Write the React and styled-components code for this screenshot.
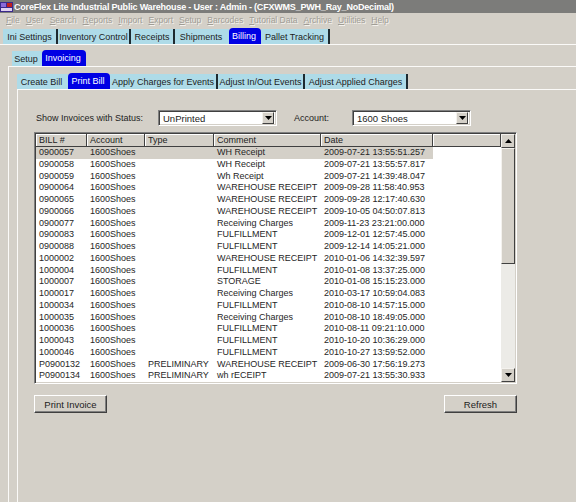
import React from 'react';
import styled, { createGlobalStyle } from 'styled-components';

const GlobalStyle = createGlobalStyle`
  html, body {
    margin: 0;
    padding: 0;
    background: #d4d0c8;
  }
  #root {
    width: 576px;
    height: 502px;
    overflow: hidden;
  }
`;

const Window = styled.div`
  width: 576px;
  height: 502px;
  background: #d4d0c8;
  font-family: 'Liberation Sans', Arial, sans-serif;
  font-size: 9px;
  color: #1c1c1c;
  display: flex;
  flex-direction: column;
`;

const TitleBar = styled.div`
  height: 13px;
  background: #7c7c7a;
  display: flex;
  align-items: center;
  gap: 1px;
  color: #fff;
  font-weight: bold;
  font-size: 9px;
  letter-spacing: -0.2px;
  white-space: nowrap;
  overflow: hidden;
`;

const MenuBar = styled.div`
  height: 14px;
  display: flex;
  align-items: center;
  gap: 6px;
  padding-left: 6px;
  font-size: 8.5px;
  color: #a09d96;
  text-shadow: 1px 1px 0 #f4f2ee;
`;

const MenuItem = styled.span`
  u { text-decoration: underline; }
`;

const TabStrip = styled.div`
  display: flex;
  align-items: flex-end;
  height: 16px;
  margin-left: ${(p) => p.$indent || 0}px;
  margin-top: ${(p) => p.$top || 0}px;
`;

const Tab = styled.div`
  width: ${(p) => p.$w}px;
  height: ${(p) => (p.$active ? 16 : 15)}px;
  display: flex;
  align-items: center;
  justify-content: center;
  background: ${(p) => (p.$active ? '#0000e4' : '#aedbe8')};
  color: ${(p) => (p.$active ? '#ffffff' : '#1c1c1c')};
  border-radius: ${(p) => (p.$active ? '4px 4px 0 0' : '0')};
  border-right: 2px solid ${(p) => (p.$sep ? '#1e2a30' : 'transparent')};
  box-sizing: border-box;
  white-space: nowrap;
`;

const Panel = styled.div`
  border-top: 1px solid #fbfaf8;
  border-left: ${(p) => (p.$left ? '1px solid #fbfaf8' : 'none')};
  padding: ${(p) => p.$pad};
  flex: 1;
  display: flex;
  flex-direction: column;
`;

const FilterRow = styled.div`
  display: flex;
  align-items: center;
  height: 16px;
`;

const Label = styled.div`
  width: ${(p) => p.$w}px;
  padding-left: ${(p) => p.$pl || 0}px;
  white-space: nowrap;
`;

const Select = styled.div`
  width: 119px;
  height: 16px;
  box-sizing: border-box;
  background: #fff;
  border-top: 1px solid #808080;
  border-left: 1px solid #808080;
  border-right: 1px solid #fff;
  border-bottom: 1px solid #fff;
  box-shadow: inset 1px 1px 0 #404040, inset -1px -1px 0 #d4d0c8;
  display: flex;
  align-items: center;
  padding-left: 4px;
  padding-right: 2px;
  font-size: 9.5px;
  margin-right: ${(p) => p.$mr || 0}px;
`;

const SelectText = styled.span`
  flex: 1;
`;

const ArrowButton = styled.div`
  width: ${(p) => p.$w || 12}px;
  height: ${(p) => p.$h || 12}px;
  box-sizing: border-box;
  background: #d4d0c8;
  border-top: 1px solid #f4f2ee;
  border-left: 1px solid #f4f2ee;
  border-right: 1px solid #404040;
  border-bottom: 1px solid #404040;
  display: flex;
  align-items: center;
  justify-content: center;
  flex-shrink: 0;
`;

const Table = styled.div`
  margin-top: 6px;
  width: 483px;
  height: 252px;
  box-sizing: border-box;
  border-top: 1px solid #808080;
  border-left: 1px solid #808080;
  border-right: 1px solid #fff;
  border-bottom: 1px solid #fff;
  box-shadow: inset 1px 1px 0 #404040, inset -1px -1px 0 #d4d0c8;
  padding: 1px;
  display: flex;
  background: #fff;
`;

const Grid = styled.div`
  flex: 1;
  display: flex;
  flex-direction: column;
  overflow: hidden;
`;

const Header = styled.div`
  display: grid;
  grid-template-columns: 51px 58px 69px 107px 112px 1fr;
  height: 14px;
  background: #d4d0c8;
  border-bottom: 1px solid #404040;
  box-sizing: border-box;
`;

const HeadCell = styled.div`
  padding-left: 3px;
  display: flex;
  align-items: center;
  border-right: 1px solid #404040;
  box-shadow: inset 1px 1px 0 #fff;
  white-space: nowrap;
  color: #222;
`;

const Row = styled.div`
  display: grid;
  grid-template-columns: 51px 58px 69px 107px 112px;
  width: 397px;
  height: 11.75px;
  line-height: 11.75px;
  background: ${(p) => (p.$selected ? '#d4d0c8' : 'transparent')};
`;

const Cell = styled.div`
  padding-left: 3px;
  white-space: nowrap;
  overflow: hidden;
  color: #262626;
`;

const ScrollBar = styled.div`
  width: 14px;
  display: flex;
  flex-direction: column;
  background: #ecebe7;
`;

const Thumb = styled.div`
  height: 116px;
  box-sizing: border-box;
  background: #d4d0c8;
  border-top: 1px solid #f4f2ee;
  border-left: 1px solid #f4f2ee;
  border-right: 1px solid #404040;
  border-bottom: 1px solid #404040;
`;

const Track = styled.div`
  flex: 1;
`;

const ButtonRow = styled.div`
  margin-top: 11px;
  width: 483px;
  display: flex;
  justify-content: space-between;
`;

const Button = styled.div`
  width: 73px;
  height: 18px;
  box-sizing: border-box;
  background: #d4d0c8;
  border-top: 1px solid #fff;
  border-left: 1px solid #fff;
  border-right: 1px solid #404040;
  border-bottom: 1px solid #404040;
  box-shadow: inset -1px -1px 0 #808080;
  display: flex;
  align-items: center;
  justify-content: center;
  color: #1c1c1c;
  font-size: 9.5px;
`;

const Down = () => (
  <svg width="7" height="4" viewBox="0 0 7 4">
    <path d="M0 0h7L3.5 4z" fill="#000" />
  </svg>
);

const Up = () => (
  <svg width="7" height="4" viewBox="0 0 7 4">
    <path d="M0 4h7L3.5 0z" fill="#000" />
  </svg>
);

const AppIcon = () => (
  <svg width="13" height="12" viewBox="0 0 13 12">
    <rect x="0" y="1" width="13" height="10" fill="#3a2a8c" />
    <rect x="1" y="2" width="5" height="4" fill="#8a6ad8" />
    <rect x="7" y="2" width="5" height="4" fill="#c02020" />
    <rect x="1" y="7" width="11" height="3" fill="#e0d0f0" />
  </svg>
);

const menus = [
  ['F', 'ile'], ['U', 'ser'], ['S', 'earch'], ['R', 'eports'], ['I', 'mport'],
  ['E', 'xport'], ['S', 'etup'], ['B', 'arcodes'], ['T', 'utorial Data'],
  ['A', 'rchive'], ['U', 'tilities'], ['H', 'elp'],
];

const topTabs = [
  { label: 'Ini Settings', w: 55, sep: true },
  { label: 'Inventory Control', w: 73, sep: true },
  { label: 'Receipts', w: 44, sep: true },
  { label: 'Shipments', w: 54, sep: false },
  { label: 'Billing', w: 32, active: true },
  { label: 'Pallet Tracking', w: 69, sep: true },
];

const billTabs = [
  { label: 'Create Bill', w: 51, sep: false },
  { label: 'Print Bill', w: 42, active: true },
  { label: 'Apply Charges for Events', w: 108, sep: true },
  { label: 'Adjust In/Out Events', w: 87, sep: true },
  { label: 'Adjust Applied Charges', w: 103, sep: true },
];

const rows = [
  ['0900057', '', 'WH Receipt', '2009-07-21 13:55:51.257'],
  ['0900058', '', 'WH Receipt', '2009-07-21 13:55:57.817'],
  ['0900059', '', 'Wh Receipt', '2009-07-21 14:39:48.047'],
  ['0900064', '', 'WAREHOUSE RECEIPT', '2009-09-28 11:58:40.953'],
  ['0900065', '', 'WAREHOUSE RECEIPT', '2009-09-28 12:17:40.630'],
  ['0900066', '', 'WAREHOUSE RECEIPT', '2009-10-05 04:50:07.813'],
  ['0900077', '', 'Receiving Charges', '2009-11-23 23:21:00.000'],
  ['0900083', '', 'FULFILLMENT', '2009-12-01 12:57:45.000'],
  ['0900088', '', 'FULFILLMENT', '2009-12-14 14:05:21.000'],
  ['1000002', '', 'WAREHOUSE RECEIPT', '2010-01-06 14:32:39.597'],
  ['1000004', '', 'FULFILLMENT', '2010-01-08 13:37:25.000'],
  ['1000007', '', 'STORAGE', '2010-01-08 15:15:23.000'],
  ['1000017', '', 'Receiving Charges', '2010-03-17 10:59:04.083'],
  ['1000034', '', 'FULFILLMENT', '2010-08-10 14:57:15.000'],
  ['1000035', '', 'Receiving Charges', '2010-08-10 18:49:05.000'],
  ['1000036', '', 'FULFILLMENT', '2010-08-11 09:21:10.000'],
  ['1000043', '', 'FULFILLMENT', '2010-10-20 10:36:29.000'],
  ['1000046', '', 'FULFILLMENT', '2010-10-27 13:59:52.000'],
  ['P0900132', 'PRELIMINARY', 'WAREHOUSE RECEIPT', '2009-06-30 17:56:19.273'],
  ['P0900134', 'PRELIMINARY', 'wh rECEIPT', '2009-07-21 13:55:30.933'],
];

export default function App() {
  return (
    <Window>
      <GlobalStyle />
      <TitleBar>
        <AppIcon />
        <span>CoreFlex Lite Industrial Public Warehouse - User : Admin - (CFXWMS_PWH_Ray_NoDecimal)</span>
      </TitleBar>
      <MenuBar>
        {menus.map(([k, rest], i) => (
          <MenuItem key={i}>
            <u>{k}</u>
            {rest}
          </MenuItem>
        ))}
      </MenuBar>
      <TabStrip $indent={3} $top={1}>
        {topTabs.map((t) => (
          <Tab key={t.label} $w={t.w} $active={t.active} $sep={t.sep}>
            {t.label}
          </Tab>
        ))}
      </TabStrip>
      <Panel $pad="5px 0 0 8px">
        <TabStrip $indent={4}>
          <Tab $w={30}>Setup</Tab>
          <Tab $w={44} $active>Invoicing</Tab>
        </TabStrip>
        <Panel $left $pad="6px 0 0 8px">
          <TabStrip>
            {billTabs.map((t) => (
              <Tab key={t.label} $w={t.w} $active={t.active} $sep={t.sep}>
                {t.label}
              </Tab>
            ))}
          </TabStrip>
          <Panel $left $pad="20px 0 0 16px">
            <FilterRow>
              <Label $w={122} $pl={2}>Show Invoices with Status:</Label>
              <Select $mr={17}>
                <SelectText>UnPrinted</SelectText>
                <ArrowButton>
                  <Down />
                </ArrowButton>
              </Select>
              <Label $w={58}>Account:</Label>
              <Select>
                <SelectText>1600 Shoes</SelectText>
                <ArrowButton>
                  <Down />
                </ArrowButton>
              </Select>
            </FilterRow>
            <Table>
              <Grid>
                <Header>
                  <HeadCell>BILL #</HeadCell>
                  <HeadCell>Account</HeadCell>
                  <HeadCell>Type</HeadCell>
                  <HeadCell>Comment</HeadCell>
                  <HeadCell>Date</HeadCell>
                  <HeadCell />
                </Header>
                {rows.map((r, i) => (
                  <Row key={r[0]} $selected={i === 0}>
                    <Cell>{r[0]}</Cell>
                    <Cell>1600Shoes</Cell>
                    <Cell>{r[1]}</Cell>
                    <Cell>{r[2]}</Cell>
                    <Cell>{r[3]}</Cell>
                  </Row>
                ))}
              </Grid>
              <ScrollBar>
                <ArrowButton $w={14} $h={14}>
                  <Up />
                </ArrowButton>
                <Thumb />
                <Track />
                <ArrowButton $w={14} $h={14}>
                  <Down />
                </ArrowButton>
              </ScrollBar>
            </Table>
            <ButtonRow>
              <Button>Print Invoice</Button>
              <Button>Refresh</Button>
            </ButtonRow>
          </Panel>
        </Panel>
      </Panel>
    </Window>
  );
}
